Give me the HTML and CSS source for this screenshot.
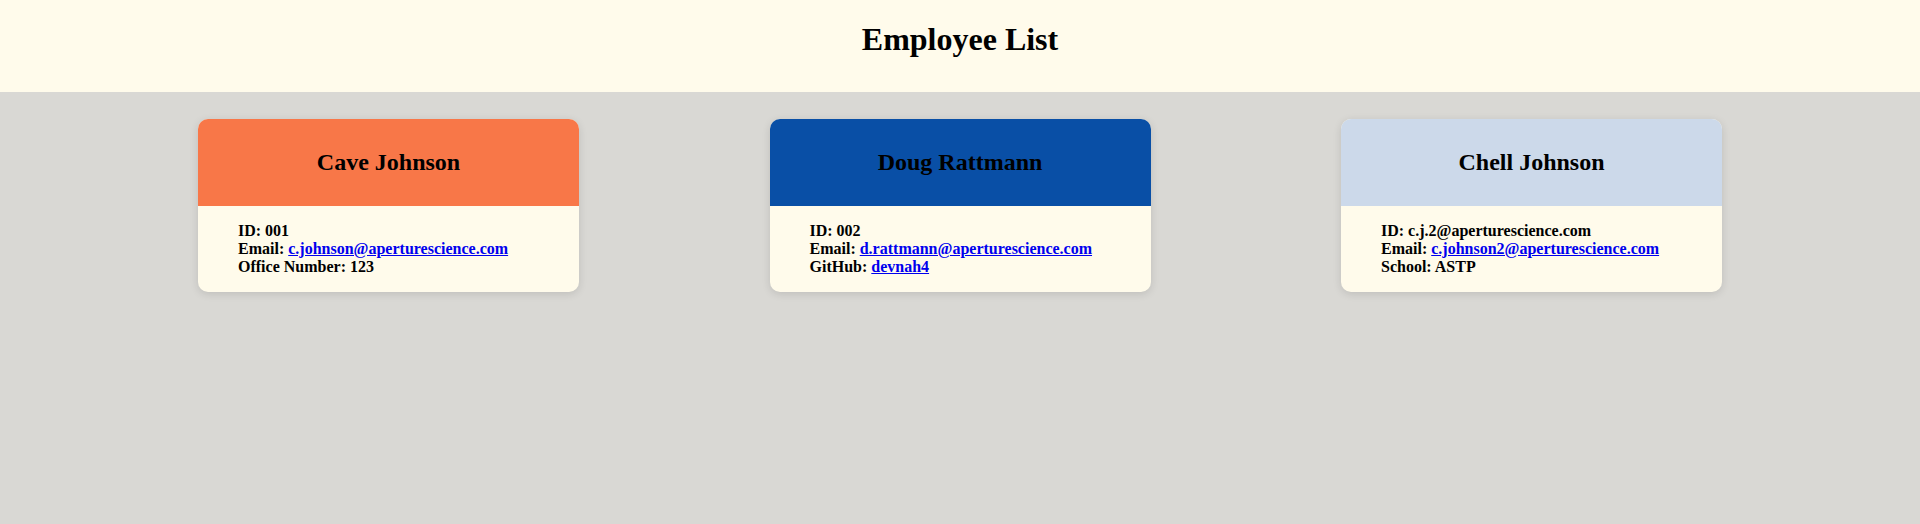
FILE: index.html
```html
<!DOCTYPE html>
<html>
<head>
<meta charset="utf-8">
<link rel="stylesheet" href="styles.css">
</head>
<body>
<header class="page-header"><h1 class="title">Employee List</h1></header>
<main class="cards">
  <div class="card">
    <div class="card-head manager"><h2 class="name">Cave Johnson</h2></div>
    <div class="card-body">
      <ul class="info">
        <li>ID: 001</li>
        <li>Email: <a href="#">c.johnson@aperturescience.com</a></li>
        <li>Office Number: 123</li>
      </ul>
    </div>
  </div>
  <div class="card">
    <div class="card-head engineer"><h2 class="name">Doug Rattmann</h2></div>
    <div class="card-body">
      <ul class="info">
        <li>ID: 002</li>
        <li>Email: <a href="#">d.rattmann@aperturescience.com</a></li>
        <li>GitHub: <a href="#">devnah4</a></li>
      </ul>
    </div>
  </div>
  <div class="card">
    <div class="card-head intern"><h2 class="name">Chell Johnson</h2></div>
    <div class="card-body">
      <ul class="info">
        <li>ID: c.j.2@aperturescience.com</li>
        <li>Email: <a href="#">c.johnson2@aperturescience.com</a></li>
        <li>School: ASTP</li>
      </ul>
    </div>
  </div>
</main>
</body>
</html>
```
FILE: styles.css
```css
html, body {
  margin: 0;
  padding: 0;
}
body {
  background: #d9d8d4;
  font-family: "Liberation Serif", "Times New Roman", serif;
  color: #000;
  min-height: 524px;
}
.page-header {
  background: #fffbeb;
  height: 92px;
  box-sizing: border-box;
  padding-top: 21px;
  text-align: center;
}
.title {
  margin: 0;
  font-size: 32px;
  font-weight: bold;
  line-height: 37px;
}
.cards {
  display: flex;
  justify-content: center;
  gap: 190.5px;
  padding-top: 27px;
}
.card {
  width: 381px;
  border-radius: 10px;
  overflow: hidden;
  background: #fffbeb;
  box-shadow: 0 2px 8px rgba(0, 0, 0, 0.12);
}
.card-head {
  height: 87px;
  display: flex;
  align-items: center;
  justify-content: center;
}
.manager { background: #f87748; }
.engineer { background: #094fa6; }
.intern { background: #ccd9ea; }
.name {
  margin: 0;
  font-size: 24px;
  font-weight: bold;
}
.card-body {
  padding: 0;
}
.info {
  list-style: none;
  margin: 16px 0;
  padding-left: 40px;
  font-size: 16px;
  font-weight: bold;
  line-height: 18px;
}
.info a {
  color: #0000ee;
  text-decoration: underline;
}
```
